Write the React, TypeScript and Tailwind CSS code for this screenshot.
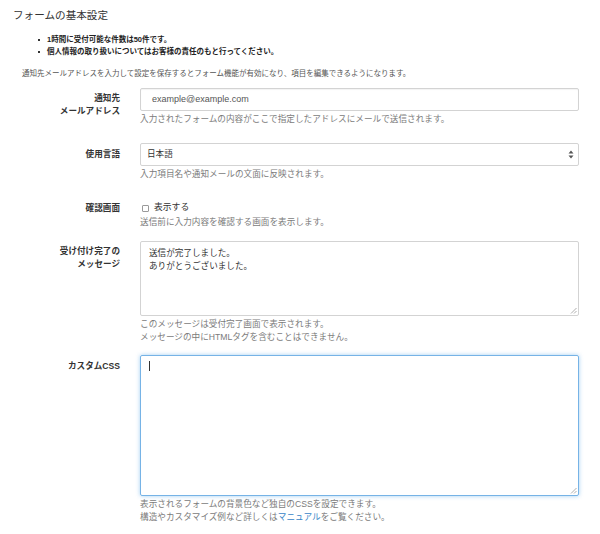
const font = "font-['Liberation_Sans','Noto_Sans_CJK_JP',sans-serif]";

function Label({ lines, pt }: { lines: string[]; pt: string }) {
  return (
    <div className={`w-[107px] shrink-0 text-right text-[8.6px] font-bold leading-[12.5px] text-[#333] ${pt}`}>
      {lines.map((l) => (
        <div key={l}>{l}</div>
      ))}
    </div>
  );
}

function Help({ children, className = "" }: { children: React.ReactNode; className?: string }) {
  return <div className={`text-[8.65px] leading-[13px] text-[#7b7b7b] ${className}`}>{children}</div>;
}

function Grip() {
  return (
    <svg className="absolute right-[1px] bottom-[1px]" width="7" height="7" viewBox="0 0 7 7">
      <path d="M6.5 1 L1 6.5 M6.5 4 L4 6.5" stroke="#9a9a9a" strokeWidth="0.8" fill="none" />
    </svg>
  );
}

export default function App() {
  return (
    <div className={`w-[600px] h-[534px] overflow-hidden bg-white pl-[13px] ${font}`}>
      <h2 className="pt-[8px] text-[10.6px] leading-[14px] text-[#333]">フォームの基本設定</h2>

      <ul className="mt-[12px] text-[7.5px] font-bold leading-[12px] text-[#222]">
        {["1時間に受付可能な件数は50件です。", "個人情報の取り扱いについてはお客様の責任のもと行ってください。"].map((t) => (
          <li key={t} className="flex items-center">
            <span className="ml-[25px] mr-[7px] h-[2px] w-[2px] bg-[#333]" />
            {t}
          </li>
        ))}
      </ul>

      <p className="mt-[10px] pl-[9px] text-[7.5px] leading-[12px] text-[#555]">
        通知先メールアドレスを入力して設定を保存するとフォーム機能が有効になり、項目を編集できるようになります。
      </p>

      {/* email */}
      <div className="mt-[8px] flex gap-[20px]">
        <Label lines={["通知先", "メールアドレス"]} pt="pt-[4px]" />
        <div className="w-[439px]">
          <div className="flex h-[23px] items-center rounded-[2px] border border-[#d3d3d3] pl-[11px] text-[9px] text-[#555] shadow-[inset_0_1px_1px_rgba(0,0,0,0.05)]">
            example@example.com
          </div>
          <Help className="mt-[1px] leading-[14px]">入力されたフォームの内容がここで指定したアドレスにメールで送信されます。</Help>
        </div>
      </div>

      {/* language */}
      <div className="mt-[17px] flex gap-[20px]">
        <Label lines={["使用言語"]} pt="pt-[5px]" />
        <div className="w-[439px]">
          <div className="flex h-[23px] items-center justify-between rounded-[2px] border border-[#d3d3d3] pl-[6px] pr-[4px] text-[8.6px] text-[#333]">
            日本語
            <svg width="6" height="9" viewBox="0 0 6 9">
              <path d="M3 0.5 L5.5 3.5 H0.5 Z M3 8.5 L5.5 5.5 H0.5 Z" fill="#555" />
            </svg>
          </div>
          <Help className="mt-[1px] leading-[14px]">入力項目名や通知メールの文面に反映されます。</Help>
        </div>
      </div>

      {/* confirm */}
      <div className="mt-[20px] flex gap-[20px]">
        <Label lines={["確認画面"]} pt="pt-[1px]" />
        <div className="w-[439px]">
          <div className="flex h-[14px] items-center text-[8.8px] text-[#333]">
            <span className="ml-[2px] mr-[5px] h-[7px] w-[7px] rounded-[1px] border border-[#9a9a9a] bg-white" />
            表示する
          </div>
          <Help className="leading-[14px]">送信前に入力内容を確認する画面を表示します。</Help>
        </div>
      </div>

      {/* complete message */}
      <div className="mt-[12px] flex gap-[20px]">
        <Label lines={["受け付け完了の", "メッセージ"]} pt="pt-[4px]" />
        <div className="w-[439px]">
          <div className="relative h-[75px] rounded-[2px] border border-[#d3d3d3] pl-[8px] pt-[5px] text-[8.6px] leading-[13px] text-[#333]">
            <div>送信が完了しました。</div>
            <div>ありがとうございました。</div>
            <Grip />
          </div>
          <Help className="mt-[2px]">
            <div>このメッセージは受付完了画面で表示されます。</div>
            <div>メッセージの中にHTMLタグを含むことはできません。</div>
          </Help>
        </div>
      </div>

      {/* custom css */}
      <div className="mt-[11px] flex gap-[20px]">
        <Label lines={["カスタムCSS"]} pt="pt-[5px]" />
        <div className="w-[439px]">
          <div className="relative h-[141px] rounded-[2px] border border-[#76b3e6] shadow-[0_0_4px_rgba(102,175,233,0.6)]">
            <span className="absolute left-[8px] top-[5px] h-[10px] w-[1px] bg-[#333]" />
            <Grip />
          </div>
          <Help className="mt-[2px]">
            <div>表示されるフォームの背景色など独自のCSSを設定できます。</div>
            <div>
              構造やカスタマイズ例など詳しくは<span className="text-[#3a86c8]">マニュアル</span>をご覧ください。
            </div>
          </Help>
        </div>
      </div>
    </div>
  );
}
